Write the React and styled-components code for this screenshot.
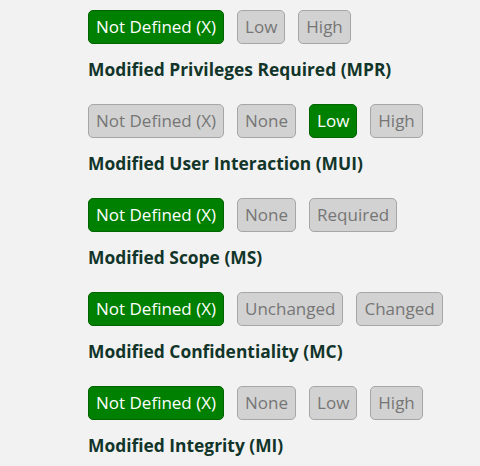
import React from "react";
import styled, { createGlobalStyle } from "styled-components";

const Global = createGlobalStyle`
  html, body { margin: 0; padding: 0; background: #f2f2f2; }
  body { font-family: "Open Sans", "Noto Sans", sans-serif; }
`;

const Page = styled.div`
  padding: 10px 0 0 88px;
  display: flex;
  flex-direction: column;
`;

const Metric = styled.section`
  display: flex;
  flex-direction: column;
`;

const Options = styled.div`
  display: flex;
  gap: 13px;
  height: 34px;
`;

const Option = styled.button`
  font-family: inherit;
  font-size: 17px;
  line-height: 22px;
  height: 34px;
  padding: 0 7px;
  border-radius: 5px;
  border: 1px solid ${(p) => (p.$active ? "#006400" : "#a6a6a6")};
  background: ${(p) => (p.$active ? "#008000" : "#d2d2d2")};
  color: ${(p) => (p.$active ? "#ffffff" : "#767676")};
  cursor: pointer;
  white-space: nowrap;
`;

const Heading = styled.h3`
  margin: 13px 0 23px;
  font-size: 17.4px;
  line-height: 24px;
  font-weight: 700;
  color: #12352a;
`;

const metrics = [
  { title: "Modified Privileges Required (MPR)", options: ["Not Defined (X)", "Low", "High"], active: 0 },
  { title: "Modified User Interaction (MUI)", options: ["Not Defined (X)", "None", "Low", "High"], active: 2 },
  { title: "Modified Scope (MS)", options: ["Not Defined (X)", "None", "Required"], active: 0 },
  { title: "Modified Confidentiality (MC)", options: ["Not Defined (X)", "Unchanged", "Changed"], active: 0 },
  { title: "Modified Integrity (MI)", options: ["Not Defined (X)", "None", "Low", "High"], active: 0 },
];

export default function App() {
  return (
    <>
      <Global />
      <Page>
        {metrics.map((m) => (
          <Metric key={m.title}>
            <Options>
              {m.options.map((o, i) => (
                <Option key={o} $active={i === m.active}>{o}</Option>
              ))}
            </Options>
            <Heading>{m.title}</Heading>
          </Metric>
        ))}
      </Page>
    </>
  );
}
